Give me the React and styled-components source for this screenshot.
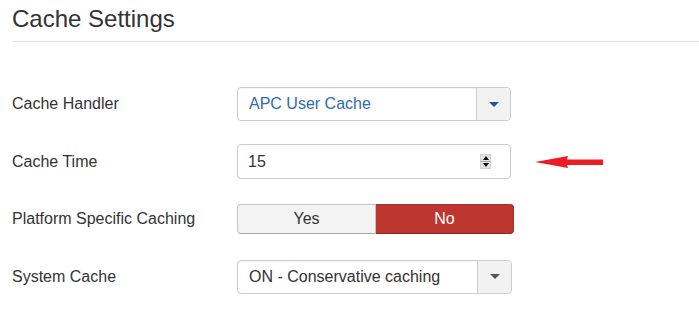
import React from "react";
import styled, { createGlobalStyle } from "styled-components";

const Global = createGlobalStyle`
  body {
    margin: 0;
    background: #fff;
    font-family: "Liberation Sans", Arial, sans-serif;
    color: #333;
  }
`;

const Page = styled.div`
  width: 699px;
  height: 322px;
  overflow: hidden;
`;

const Header = styled.h1`
  margin: 0 0 0 12px;
  padding: 6px 0 9px;
  font-size: 24px;
  line-height: 1.1;
  font-weight: 400;
  color: #333;
  border-bottom: 1px solid #e5e5e5;
`;

const Form = styled.div`
  display: flex;
  flex-direction: column;
  padding: 33px 0 0 12px;
`;

const Row = styled.div`
  display: flex;
  align-items: center;
  height: 57.5px;
`;

const Label = styled.label`
  width: 225px;
  flex-shrink: 0;
  font-size: 16px;
  color: #333;
`;

const Select = styled.div`
  display: flex;
  width: ${(p) => p.$w || 274}px;
  height: 34px;
  box-sizing: border-box;
  border: 1px solid #ccc;
  border-radius: 4px;
  box-shadow: inset 0 1px 1px rgba(0, 0, 0, 0.04);
  background: #fff;
  overflow: hidden;
`;

const SelectValue = styled.div`
  flex: 1;
  display: flex;
  align-items: center;
  padding-left: 11px;
  font-size: 16px;
  color: ${(p) => p.$color || "#333"};
`;

const SelectButton = styled.div`
  width: 33px;
  display: flex;
  align-items: center;
  justify-content: center;
  background: #f2f2f2;
  border-left: 1px solid #ccc;
`;

const Caret = styled.span`
  width: 0;
  height: 0;
  border-left: 5px solid transparent;
  border-right: 5px solid transparent;
  border-top: 5px solid ${(p) => p.$color || "#555"};
`;

const Input = styled.div`
  display: flex;
  align-items: center;
  justify-content: space-between;
  width: 274px;
  height: 35px;
  box-sizing: border-box;
  padding: 0 19px 0 10px;
  border: 1px solid #ccc;
  border-radius: 4px;
  font-size: 16px;
  color: #333;
`;

const Spinner = styled.div`
  display: flex;
  flex-direction: column;
  width: 9px;
  height: 13px;
  background: #e3e3e3;
  border: 1px solid #d0d0d0;
`;

const SpinHalf = styled.div`
  flex: 1;
  display: flex;
  align-items: center;
  justify-content: center;
  & + & {
    border-top: 1px solid #a8a8a8;
  }
`;

const Tri = styled.span`
  width: 0;
  height: 0;
  border-left: 3.5px solid transparent;
  border-right: 3.5px solid transparent;
  ${(p) =>
    p.$up ? "border-bottom: 4px solid #111;" : "border-top: 4px solid #111;"}
`;

const Toggle = styled.div`
  display: flex;
  width: 277px;
  height: 30px;
`;

const ToggleButton = styled.div`
  flex: 1;
  display: flex;
  align-items: center;
  justify-content: center;
  box-sizing: border-box;
  font-size: 16px;
  color: ${(p) => (p.$active ? "#fff" : "#333")};
  background: ${(p) => (p.$active ? "#bd362f" : "#f3f3f3")};
  border: 1px solid ${(p) => (p.$active ? "#a52f29" : "#c4c4c4")};
  border-bottom-color: ${(p) => (p.$active ? "#8f2923" : "#a9a9a9")};
  border-radius: ${(p) => (p.$first ? "4px 0 0 4px" : "0 4px 4px 0")};
  ${(p) => (p.$first ? "" : "border-left: none;")}
`;

const Pointer = styled.svg`
  margin-left: 24px;
  flex-shrink: 0;
`;

export default function App() {
  return (
    <Page>
      <Global />
      <Header>Cache Settings</Header>
      <Form>
        <Row>
          <Label>Cache Handler</Label>
          <Select>
            <SelectValue $color="#2f6bb2">APC User Cache</SelectValue>
            <SelectButton>
              <Caret $color="#245596" />
            </SelectButton>
          </Select>
        </Row>
        <Row>
          <Label>Cache Time</Label>
          <Input>
            15
            <Spinner>
              <SpinHalf>
                <Tri $up />
              </SpinHalf>
              <SpinHalf>
                <Tri />
              </SpinHalf>
            </Spinner>
          </Input>
          <Pointer width="68" height="14" viewBox="0 0 68 14">
            <path d="M0 7 L33 1 L32 4.5 L68 4.5 L68 10 L32 10 L33 13 Z" fill="#ed1c24" />
          </Pointer>
        </Row>
        <Row>
          <Label>Platform Specific Caching</Label>
          <Toggle>
            <ToggleButton $first>Yes</ToggleButton>
            <ToggleButton $active>No</ToggleButton>
          </Toggle>
        </Row>
        <Row>
          <Label>System Cache</Label>
          <Select $w={275}>
            <SelectValue>ON - Conservative caching</SelectValue>
            <SelectButton>
              <Caret />
            </SelectButton>
          </Select>
        </Row>
      </Form>
    </Page>
  );
}
